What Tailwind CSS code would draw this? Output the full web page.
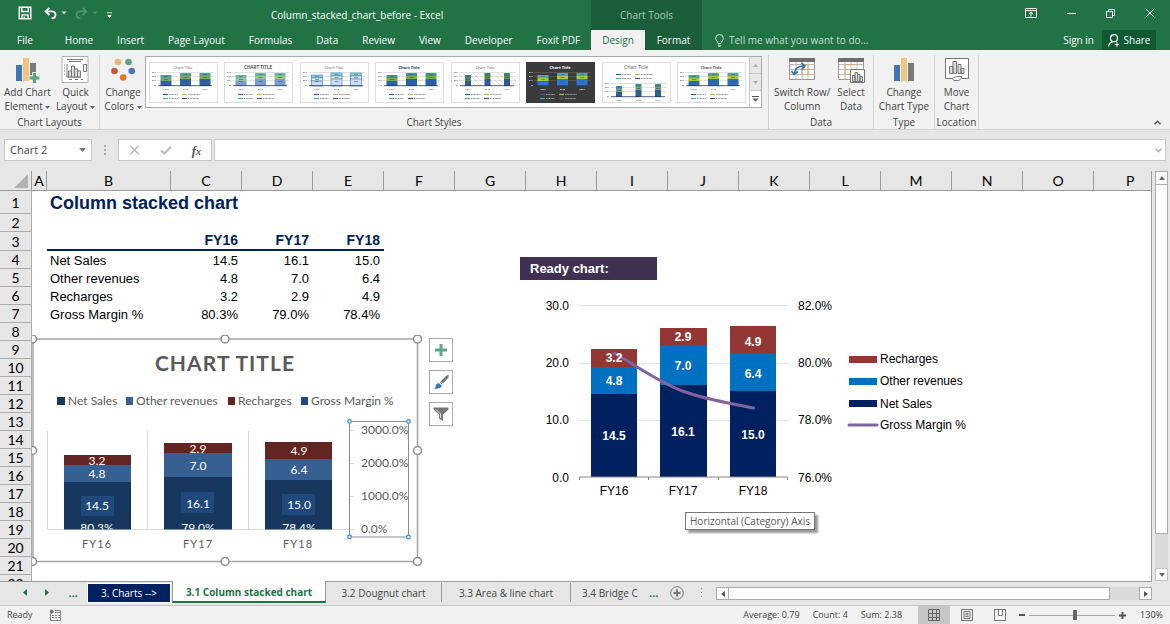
<!DOCTYPE html>
<html lang="en">
<head>
    <meta charset="UTF-8">
    <meta name="viewport" content="width=device-width, initial-scale=1.0">
    <title>Column_stacked_chart_before - Excel</title>
    <script src="https://cdn.jsdelivr.net/npm/@tailwindcss/browser@4"></script>
</head>
<body class="h-screen flex flex-col overflow-hidden bg-[#e6e6e6] font-['Open_Sans',sans-serif] text-[10px] text-[#444]">

    <!-- Title bar and tabs -->
    <header class="bg-[#217346] text-white shrink-0">
        <div class="flex h-[30px]">
            <div class="flex w-[591px] items-center">
                <div class="flex items-center w-[271px] pl-[18px] gap-2 pb-1">
                    <button aria-label="Save"><svg width="14" height="14" viewBox="0 0 14 14" fill="none" stroke="#fff" stroke-width="1.4"><path d="M1.2 1.2h11.6v11.6H1.2zM3.7 1.2v4.3h6.6V1.2M4 12.8V8.9h6v3.9M6.3 10.5v2"/></svg></button>
                    <button aria-label="Undo" class="flex items-center gap-1 pl-1"><svg width="13" height="13" viewBox="0 0 13 13" fill="none" stroke="#fff" stroke-width="1.8"><path d="M5.4 .8L1.6 4.4l3.8 3.6M1.8 4.4h6.4c4.6 .2 4.4 6.6-.6 7"/></svg><svg width="6" height="4" viewBox="0 0 6 4"><path d="M.5 .5h5L3 3.3z" fill="#fff"/></svg></button>
                    <button aria-label="Redo" class="flex items-center gap-1"><svg width="13" height="13" viewBox="0 0 13 13" fill="none" stroke="#4f9570" stroke-width="1.8"><path d="M7.6 .8l3.8 3.6-3.8 3.6M11.2 4.4H4.8C.2 4.6 .4 11 5.4 11.4"/></svg><svg width="6" height="4" viewBox="0 0 6 4"><path d="M.5 .5h5L3 3.3z" fill="#4f9570"/></svg></button>
                    <button aria-label="Customize toolbar" class="pt-1"><svg width="7" height="7" viewBox="0 0 7 7"><path d="M1 .8h5M1.8 3.500h3.400L3.500 5.500z" fill="#fff" stroke="#fff" stroke-width=".8"/></svg></button>
                </div>
                <h1>Column_stacked_chart_before - Excel</h1>
            </div>
            <div class="w-[111px] bg-[#1b5e39] text-[#a8cbb7] flex items-center justify-center">Chart Tools</div>
            <div class="flex-1 flex items-center justify-end gap-[30px] pr-[15px] pb-1">
                <button aria-label="Ribbon display options"><svg width="12" height="10" viewBox="0 0 12 10" fill="none" stroke="#fff"><path d="M.5 .5h11v9H.5zM.5 2.5h11M6 8.5V4M4 5.8L6 4l2 1.8"/></svg></button>
                <button aria-label="Minimize"><svg width="9" height="10" viewBox="0 0 9 10" stroke="#fff"><path d="M0 5.5h9"/></svg></button>
                <button aria-label="Restore"><svg width="9" height="9" viewBox="0 0 9 9" fill="none" stroke="#fff"><path d="M.5 2.5h6v6h-6zM2.5 2.5v-2h6v6h-2"/></svg></button>
                <button aria-label="Close"><svg width="10" height="10" viewBox="0 0 10 10" stroke="#fff"><path d="M.8 .8l8.4 8.4M9.2 .8L.8 9.2"/></svg></button>
            </div>
        </div>
        <div class="flex h-[20px]">
            <nav class="flex w-[591px] items-center pl-[17px] gap-6 whitespace-nowrap">
                <a href="#file" class="pr-2">File</a>
                <a href="#home">Home</a>
                <a href="#insert">Insert</a>
                <a href="#layout">Page Layout</a>
                <a href="#formulas">Formulas</a>
                <a href="#data">Data</a>
                <a href="#review">Review</a>
                <a href="#view">View</a>
                <a href="#developer">Developer</a>
                <a href="#foxit">Foxit PDF</a>
            </nav>
            <nav class="flex w-[111px] bg-[#1b5e39]">
                <a href="#design" class="w-[54px] bg-[#f1f1f1] text-[#217346] font-medium flex items-center justify-center">Design</a>
                <a href="#format" class="flex-1 flex items-center justify-center">Format</a>
            </nav>
            <div class="flex-1 flex items-center pl-[13px]">
                <svg width="9" height="13" viewBox="0 0 9 13" fill="none" stroke="#d3e5da"><path d="M3 9.5C3 7.5 .7 6.8 .7 4.3a3.8 3.8 0 0 1 7.6 0C8.3 6.8 6 7.5 6 9.5zM3 11.2h3M3.5 12.6h2"/></svg>
                <input type="text" aria-label="Tell me" placeholder="Tell me what you want to do..." class="ml-[5px] w-[160px] outline-none placeholder:text-[#c6ddcf]">
                <a href="#signin" class="ml-auto">Sign in</a>
                <button class="ml-2 mr-[14px] h-[20px] w-[54px] bg-[#0f5a30] flex items-center justify-center gap-1"><svg width="12" height="13" viewBox="0 0 12 13" fill="none" stroke="#fff" stroke-width="1.2"><circle cx="6" cy="4.2" r="3.5"/><path d="M.6 12.5c.3-3 2-4.6 4.6-4.9M9 8.2v4.6M6.7 10.5h4.6"/></svg>Share</button>
            </div>
        </div>
    </header>

    <!-- Ribbon -->
    <section class="flex h-[80px] shrink-0 bg-[#f1f1f1] border-b border-[#d2d2d2] leading-[14px] text-center pt-[5px]">
        <div class="flex flex-col w-[100px] border-r border-[#d4d4d4]">
            <div class="flex h-[60px] items-start justify-between px-1">
                <button class="flex flex-col items-center">
                    <svg width="26" height="28" viewBox="0 0 26 28"><path fill="#3f76b4" d="M2 10h6v16H2z"/><path fill="#eec77d" d="M9 3h6v23H9z"/><path fill="#7a7a7a" d="M16 8h6v12h-6z"/><path fill="#5ba37f" stroke="#f1f1f1" d="M18.500 17.500h4v3.500h3.500v4h-3.500v3.500h-4v-3.500H15v-4h3.500z"/></svg>
                    <span class="mt-[2px]">Add Chart</span><span>Element <svg class="inline" width="5" height="3"><path d="M0 0h5L2.500 3z" fill="#666"/></svg></span>
                </button>
                <button class="flex flex-col items-center">
                    <svg width="28" height="28" viewBox="0 0 28 28" fill="none" stroke="#777"><path fill="#fff" d="M1 1.500h26v26H1z" stroke="#b0b0b0"/><path d="M6 4.500h16M8 6.500h12M3 10h1M3 13h1M3 16h1M3 19h1M6 9v13h14M8 24.500h3M14 24.500h3M20 24.500h2"/><path fill="#ddd" d="M7.500 16h3v6h-3zM10.500 11h3v11h-3zM13.500 14h3v8h-3zM16.500 16h3v6h-3z"/><path d="M22.500 9.500h3v7h-3z"/></svg>
                    <span class="mt-[2px]">Quick</span><span>Layout <svg class="inline" width="5" height="3"><path d="M0 0h5L2.500 3z" fill="#666"/></svg></span>
                </button>
            </div>
            <div>Chart Layouts</div>
        </div>
        <div class="flex flex-col w-[669px] border-r border-[#d4d4d4]">
            <div class="flex h-[60px] items-start">
                <button class="flex flex-col items-center w-[45px] pl-px">
                    <svg width="26" height="28" viewBox="0 0 26 28"><circle cx="8" cy="7" r="3.300" fill="#e8b470"/><circle cx="18.500" cy="7" r="3.300" fill="#63a188"/><circle cx="4.500" cy="16" r="3.300" fill="#c9573a"/><circle cx="21.800" cy="16" r="3.300" fill="#4678b8"/><circle cx="13.200" cy="22.500" r="3.300" fill="#dd7a2b"/></svg>
                    <span class="mt-[2px]">Change</span><span>Colors <svg class="inline" width="5" height="3"><path d="M0 0h5L2.500 3z" fill="#666"/></svg></span>
                </button>
                <div class="flex w-[617px] h-[52px] mt-px border border-[#ababab] bg-white">
                    <div id="styleGallery" class="flex flex-1 items-center justify-between px-[3px]"></div>
                    <div class="flex flex-col w-[12px] border-l border-[#c6c6c6]">
                        <button aria-label="Scroll up" class="flex-1 bg-[#e8e8e8] border-b border-[#c6c6c6] flex items-center justify-center"><svg width="5" height="3"><path d="M0 3h5L2.500 0z" fill="#aaa"/></svg></button>
                        <button aria-label="Scroll down" class="flex-1 bg-[#e8e8e8] border-b border-[#c6c6c6] flex items-center justify-center"><svg width="5" height="3"><path d="M0 0h5L2.500 3z" fill="#aaa"/></svg></button>
                        <button aria-label="More styles" class="flex-1 bg-white flex items-center justify-center"><svg width="7" height="6"><path d="M0 0h7v1H0zM.5 2.500h6L3.500 5.500z" fill="#555"/></svg></button>
                    </div>
                </div>
            </div>
            <div>Chart Styles</div>
        </div>
        <div class="flex flex-col w-[105px] border-r border-[#d4d4d4]">
            <div class="flex h-[60px] items-start justify-between pl-[5px] pr-2">
                <button class="flex flex-col items-center whitespace-nowrap">
                    <svg width="26" height="28" viewBox="0 0 26 28" fill="none"><path fill="#fff" stroke="#999" d="M.5 3.500h25v21H.5z"/><path stroke="#bbb" d="M1 9.500h24M1 14.500h24M1 19.500h24M7 5v19M13 5v19M19 5v19"/><path fill="#6d6d6d" d="M0 3h26v4H0z"/><path stroke="#e3a366" d="M13 9.500h6v10h-6zM13 14.500h6"/><path stroke="#3575b5" stroke-width="1.700" d="M5.500 19c0-5 3-8 9.500-8M12.500 8l3.500 3-3.500 3.500M2.500 16l2.700 3.500 3.500-3"/></svg>
                    <span class="mt-[2px]">Switch Row/</span><span>Column</span>
                </button>
                <button class="flex flex-col items-center">
                    <svg width="28" height="28" viewBox="0 0 28 28" fill="none"><path fill="#fff" stroke="#999" d="M1.500 3.500h25v21h-25z"/><path stroke="#bbb" d="M2 9.500h24M2 14.500h24M2 19.500h24M8 5v19M14 5v19M20 5v19"/><path fill="#6d6d6d" d="M1 3h26v4H1z"/><path stroke="#e3a366" d="M8 9.500h12M8 14.500h6M8 19.500h6M8 9.500v10"/><path fill="#fff" stroke="#777" d="M13.500 14.500h14v13h-14z"/><path fill="#ddd" stroke="#777" d="M15.500 20.500h2.500v6h-2.500zM18 17.500h2.500v9H18zM20.500 19.500h2.500v7h-2.500zM23 21.500h2.500v5H23z"/></svg>
                    <span class="mt-[2px]">Select</span><span>Data</span>
                </button>
            </div>
            <div>Data</div>
        </div>
        <div class="flex flex-col w-[61px] border-r border-[#d4d4d4]">
            <button class="flex h-[60px] flex-col items-center whitespace-nowrap">
                <svg width="22" height="28" viewBox="0 0 22 28"><path fill="#3f76b4" d="M1 10h6v16H1z"/><path fill="#eec77d" d="M8 3h6v23H8z"/><path fill="#7a7a7a" d="M15 8h6v18h-6z"/></svg>
                <span class="mt-[2px]">Change</span><span>Chart Type</span>
            </button>
            <div>Type</div>
        </div>
        <div class="flex flex-col w-[44px] border-r border-[#d4d4d4]">
            <button class="flex h-[60px] flex-col items-center">
                <svg width="24" height="28" viewBox="0 0 24 28" fill="none" stroke="#777"><path fill="#fff" d="M8 23.500H.500v-20h23v20H17"/><path fill="#ddd" d="M4.500 11.500h3.500v7H4.500zM8 6.500h3.500v12H8zM13 9.500h3v9h-3zM16 13.500h3v5h-3z"/><path fill="#fff" d="M7 23.500c2-.5 3-2 6-2h4c-1 3-2 4-5 4H9z"/></svg>
                <span class="mt-[2px]">Move</span><span>Chart</span>
            </button>
            <div>Location</div>
        </div>
        <button aria-label="Collapse ribbon" class="ml-auto self-end mr-[9px] mb-1"><svg width="7" height="5" fill="none" stroke="#555" stroke-width="1.500"><path d="M.5 4.300L3.500 1.300l3 3"/></svg></button>
    </section>

    <!-- Formula bar -->
    <section class="flex h-[41px] shrink-0 items-start pt-[9px] pl-1 pr-1">
        <div class="flex items-center w-[88px] h-[22px] bg-white border border-[#c6c6c6]">
            <select aria-label="Name box" class="appearance-none flex-1 pl-[5px] text-[11px] outline-none"><option>Chart 2</option></select>
            <svg class="mr-[5px]" width="7" height="4"><path d="M0 0h7L3.500 4z" fill="#777"/></svg>
        </div>
        <svg class="mx-3 mt-[6px]" width="2" height="11" fill="#aaa"><path d="M0 0h2v2H0zM0 4h2v2H0zM0 8h2v2H0z"/></svg>
        <div class="flex items-center justify-between w-[94px] h-[22px] bg-white border border-[#c6c6c6] pl-[10px] pr-[10px]">
            <button aria-label="Cancel"><svg width="11" height="10" stroke="#bbb" stroke-width="1.500"><path d="M1 .8l9 8.400M10 .8L1 9.200"/></svg></button>
            <button aria-label="Enter"><svg width="12" height="10" fill="none" stroke="#bbb" stroke-width="2"><path d="M1 5.500l3.500 3L11 1.500"/></svg></button>
            <button class="font-['Liberation_Serif',serif] italic font-bold text-[13px] text-[#555] leading-none">f<span class="text-[10px]">x</span></button>
        </div>
        <div class="flex flex-1 items-center ml-[2px] h-[22px] bg-white border border-[#c6c6c6]">
            <input type="text" aria-label="Formula" class="flex-1 px-2 outline-none">
            <svg class="mr-[3px]" width="7" height="5" fill="none" stroke="#aaa" stroke-width="1.300"><path d="M.5 .8l3 3 3-3"/></svg>
        </div>
    </section>

    <!-- Sheet -->
    <main class="flex flex-1 min-h-0">
        <div class="relative flex-1 overflow-hidden border-r border-[#9b9b9b]">
            <table class="w-full table-fixed border-separate border-spacing-0 bg-white font-['Liberation_Sans',sans-serif] text-[13px] leading-[17px] text-black">
                <colgroup>
                    <col class="w-[32px]"><col class="w-[15px]"><col class="w-[124px]">
                    <col class="w-[71px]"><col class="w-[71px]"><col class="w-[71px]"><col class="w-[71px]"><col class="w-[71px]"><col class="w-[71px]"><col class="w-[71px]"><col class="w-[71px]"><col class="w-[71px]"><col class="w-[71px]"><col class="w-[71px]"><col class="w-[71px]"><col class="w-[71px]"><col>
                </colgroup>
                <thead class="bg-[#e6e6e6] font-['Lato',sans-serif] text-[14px]">
                    <tr id="columnHeads" class="h-[20px]"></tr>
                </thead>
                <tbody id="sheetRows"></tbody>
            </table>

            <!-- Selected chart -->
            <svg class="absolute left-[32px] top-[164px] font-['Lato',sans-serif] text-[12px]" width="392" height="234" viewBox="32 335 392 234" role="img" aria-label="Chart 2">
                <path fill="#fff" stroke="#a6a6a6" stroke-width="1.500" d="M33 339H417.500V561.500H33z"/>
                <text class="text-[21px] font-bold tracking-wider" x="225" y="371" text-anchor="middle" fill="#595959">CHART TITLE</text>
                <g fill="#595959">
                    <path fill="#17375e" d="M57 397h8v8h-8z"/><text x="68" y="405">Net Sales</text>
                    <path fill="#376092" d="M126 397h7v8h-7z"/><text x="136" y="405">Other revenues</text>
                    <path fill="#632523" d="M228 397h7v8h-7z"/><text x="238" y="405">Recharges</text>
                    <path fill="#1f497d" d="M301 397h7v8h-7z"/><text x="311" y="405">Gross Margin %</text>
                </g>
                <path fill="none" stroke="#d9d9d9" d="M47.500 431v98.500H353M147.500 431v98M248.500 431v98"/>
                <path fill="#17375e" d="M64 482h67v47.500H64zM164 477h68v52.500h-68zM265 480h67v49.500h-67z"/>
                <path fill="#376092" d="M64 465h67v17H64zM164 453h68v24h-68zM265 459h67v21h-67z"/>
                <path fill="#632523" d="M64 455h67v10H64zM164 443h68v10h-68zM265 442h67v17h-67z"/>
                <path fill="#1f497d" d="M81 496h33v20H81zM181 492h33v21h-33zM282 494h33v21h-33z"/>
                <clipPath id="plotArea"><path d="M47 431h305v98.500H47z"/></clipPath>
                <g fill="#fff" text-anchor="middle" clip-path="url(#plotArea)">
                    <text x="97" y="465">3.2</text><text x="97" y="478">4.8</text><text x="97" y="510">14.5</text><text x="97" y="532">80.3%</text>
                    <text x="198" y="453">2.9</text><text x="198" y="470">7.0</text><text x="198" y="508">16.1</text><text x="198" y="532">79.0%</text>
                    <text x="299" y="455">4.9</text><text x="299" y="474">6.4</text><text x="299" y="509">15.0</text><text x="299" y="532">78.4%</text>
                </g>
                <g class="text-[11px] tracking-widest" fill="#595959" text-anchor="middle">
                    <text x="97" y="548">FY16</text><text x="198" y="548">FY17</text><text x="298" y="548">FY18</text>
                </g>
                <path fill="none" stroke="#8c8c8c" d="M349.500 421.500h59v115.500h-59z"/>
                <path stroke="#d9d9d9" d="M350 430.500h4M350 463.500h4M350 496.500h4M350 529.500h4"/>
                <g fill="#595959"><text x="361" y="434">3000.0%</text><text x="361" y="467">2000.0%</text><text x="361" y="500">1000.0%</text><text x="361" y="533">0.0%</text></g>
                <g fill="#fff" stroke="#2e8fc9" stroke-width="1.200"><circle cx="349.500" cy="421.500" r="1.800"/><circle cx="408.500" cy="421.500" r="1.800"/><circle cx="349.500" cy="537" r="1.800"/><circle cx="408.500" cy="537" r="1.800"/></g>
                <g fill="#fff" stroke="#8c8c8c" stroke-width="1.500"><circle cx="32.500" cy="339" r="4"/><circle cx="225" cy="339" r="4"/><circle cx="417.500" cy="339" r="4"/><circle cx="32.500" cy="450.500" r="4"/><circle cx="417.500" cy="450.500" r="4"/><circle cx="32.500" cy="561.500" r="4"/><circle cx="225" cy="561.500" r="4"/><circle cx="417.500" cy="561.500" r="4"/></g>
            </svg>
            <div class="absolute left-[429px] top-[167px] flex flex-col gap-2">
                <button aria-label="Chart elements" class="size-[24px] bg-white border border-[#ababab] flex items-center justify-center"><svg width="12" height="12"><path fill="#5fa587" d="M4.500 0h3v4.500H12v3H7.500V12h-3V7.500H0v-3h4.500z"/></svg></button>
                <button aria-label="Chart styles" class="size-[24px] bg-white border border-[#ababab] flex items-center justify-center"><svg width="16" height="16"><path fill="#777" d="M15.500 .5v3L10 9.500 7.500 7.500 13 2z"/><path fill="none" stroke="#777" d="M7 8.200l2.300 2"/><path fill="#3a78b0" d="M6 9.200l2.800 2.300c0 3-5 3.500-8.300 3 1.500-.5 2-1.500 2.300-3C3.300 9.800 4.500 9 6 9.200z"/></svg></button>
                <button aria-label="Chart filters" class="size-[24px] bg-white border border-[#ababab] flex items-center justify-center"><svg width="16" height="14"><path fill="#777" d="M.5 .5h15v2L10 7.500V14l-4-2.500v-4L.5 2.500z"/><path stroke="#fff" fill="none" stroke-width=".8" d="M3 2.500l4.500 4.500v4"/></svg></button>
            </div>

            <!-- Ready chart -->
            <div class="absolute left-[520px] top-[86px] w-[137px] h-[23px] bg-[#403152] pl-[10px] flex items-center font-['Liberation_Sans',sans-serif] font-bold text-[13px] text-white">Ready chart:</div>
            <svg class="absolute left-[545px] top-[124px] font-['Liberation_Sans',sans-serif] text-[12px]" width="430" height="210" viewBox="545 295 430 210" role="img" aria-label="Ready chart">
                <path stroke="#e3e3e3" d="M579 305.500h209M579 363.500h209M579 420.500h209"/>
                <path fill="#002060" d="M591 394h46v83h-46zM660 385h47v92h-47zM730 391h46v86h-46z"/>
                <path fill="#0070c0" d="M591 367h46v27h-46zM660 345h47v40h-47zM730 354h46v37h-46z"/>
                <path fill="#943634" d="M591 349h46v18h-46zM660 328h47v17h-47zM730 326h46v28h-46z"/>
                <path fill="none" stroke="#868686" d="M579.500 480v-3h208v3M648.500 477v3M718.500 477v3"/>
                <path fill="none" stroke="#8064a2" stroke-width="3" stroke-linecap="round" d="M614 353C637 366 660 383 684 391.500C707 400 730 403 753.500 408"/>
                <g class="font-bold" fill="#fff" text-anchor="middle">
                    <text x="614" y="362">3.2</text><text x="614" y="385">4.8</text><text x="614" y="440">14.5</text>
                    <text x="683" y="341">2.9</text><text x="683" y="370">7.0</text><text x="683" y="436">16.1</text>
                    <text x="753" y="346">4.9</text><text x="753" y="378">6.4</text><text x="753" y="439">15.0</text>
                </g>
                <g text-anchor="end"><text x="569" y="310">30.0</text><text x="569" y="367">20.0</text><text x="569" y="424">10.0</text><text x="569" y="482">0.0</text></g>
                <g><text x="798" y="310">82.0%</text><text x="798" y="367">80.0%</text><text x="798" y="424">78.0%</text><text x="798" y="482">76.0%</text></g>
                <g text-anchor="middle"><text x="614" y="495">FY16</text><text x="683" y="495">FY17</text><text x="753" y="495">FY18</text></g>
                <path fill="#943634" d="M849 356h28v7h-28z"/><path fill="#0070c0" d="M849 378h28v7h-28z"/><path fill="#002060" d="M849 400h28v7h-28z"/>
                <path stroke="#8064a2" stroke-width="3" stroke-linecap="round" d="M849 425h28"/>
                <g><text x="880" y="363">Recharges</text><text x="880" y="385">Other revenues</text><text x="880" y="408">Net Sales</text><text x="880" y="429">Gross Margin %</text></g>
            </svg>
            <div class="absolute left-[685px] top-[341px] h-[18px] px-1 flex items-center bg-white border border-[#767676] shadow-[3px_3px_2px_#999] text-[#575757] whitespace-nowrap">Horizontal (Category) Axis</div>
        </div>

        <!-- Vertical scrollbar -->
        <div class="flex flex-col w-[18px] pl-[3px] pr-[2px]">
            <button aria-label="Scroll up" class="h-[14px] bg-white border border-[#ababab] flex items-center justify-center"><svg width="6" height="4"><path d="M0 4h6L3 0z" fill="#666"/></svg></button>
            <div class="flex-1 bg-[#dadada]"><div class="h-[91%] bg-white border border-t-0 border-[#ababab]"></div></div>
            <button aria-label="Scroll down" class="h-[13px] bg-white border border-[#c6c6c6] flex items-center justify-center"><svg width="6" height="4"><path d="M0 0h6L3 4z" fill="#666"/></svg></button>
        </div>
    </main>

    <!-- Sheet tabs -->
    <section class="flex h-[24px] shrink-0 items-start leading-[20px] whitespace-nowrap">
        <div class="flex w-[716px] h-[22px] border-t border-[#9b9b9b]">
            <div class="flex w-[87px] items-center justify-between pl-[22px] pr-[9px] font-bold text-[#217346]">
                <button aria-label="Previous sheet"><svg width="5" height="7"><path d="M5 0v7L1 3.500z" fill="#217346"/></svg></button>
                <button aria-label="Next sheet"><svg width="5" height="7"><path d="M0 0v7l4-3.500z" fill="#217346"/></svg></button>
                <button class="leading-none text-[11px]">...</button>
            </div>
            <a href="#s3" class="w-[84px] mt-px mr-px bg-[#002060] border border-white text-white text-center leading-[18px]">3. Charts --&gt;</a>
            <a href="#s31" class="w-[154px] -mt-px bg-white border-x border-[#9b9b9b] border-b-2 border-b-[#217346] text-[#217346] leading-[22px] font-bold text-center">3.1 Column stacked chart</a>
            <a href="#s32" class="w-[116px] my-px border-r border-[#9b9b9b] text-center">3.2 Dougnut chart</a>
            <a href="#s33" class="w-[129px] my-px border-r border-[#9b9b9b] text-center">3.3 Area &amp; line chart</a>
            <a href="#s34" class="pl-[11px] mt-px w-[72px] overflow-hidden">3.4 Bridge C</a>
            <button class="ml-[6px] font-bold text-[11px] text-[#217346] leading-none">...</button>
            <button aria-label="New sheet" class="ml-[12px]"><svg width="14" height="14" fill="none" stroke="#777"><circle cx="7" cy="7" r="6.300"/><path stroke-width="2" d="M7 3.500v7M3.500 7h7"/></svg></button>
            <svg class="ml-[17px] mt-[6px]" width="2" height="11" fill="#999"><path d="M0 0h1v1H0zM0 4h1v1H0zM0 8h1v1H0z"/></svg>
        </div>
        <div class="flex flex-1 h-[22px] border-t border-[#9b9b9b] pt-[5px] mr-[18px]">
            <button aria-label="Scroll left" class="w-[13px] h-[13px] bg-white border border-[#ababab] flex items-center justify-center"><svg width="4" height="6"><path d="M4 0v6L0 3z" fill="#555"/></svg></button>
            <div class="flex-1 h-[13px] bg-[#dadada]"><div class="w-[93%] h-[13px] bg-white border border-l-0 border-[#ababab]"></div></div>
            <button aria-label="Scroll right" class="w-[13px] h-[13px] bg-white border border-[#ababab] flex items-center justify-center"><svg width="4" height="6"><path d="M0 0v6l4-3z" fill="#555"/></svg></button>
        </div>
    </section>

    <!-- Status bar -->
    <footer class="flex h-[19px] shrink-0 items-center bg-[#f1f1f1] border-t border-[#c6c6c6] pl-[7px] pr-[7px] text-[9px] whitespace-nowrap">
        <span>Ready</span>
        <button aria-label="Record macro" class="ml-[16px]"><svg width="12" height="12" fill="none" stroke="#888"><path d="M3 4.500H1.500v7h10v-10H6M6 3.500h5"/><path stroke-dasharray="2 1" d="M3 6.500h8M3 8.500h8"/><circle cx="2.800" cy="2.500" r="2" fill="#777" stroke="none"/></svg></button>
        <div class="ml-auto flex gap-[13px] pr-4"><span>Average: 0.79</span><span>Count: 4</span><span>Sum: 2.38</span></div>
        <button aria-label="Normal" class="w-[32px] h-[18px] bg-[#c6c6c6] flex items-center justify-center"><svg width="12" height="12" fill="none" stroke="#666"><path d="M.5 .5h11v11H.5zM4.500 0v12M8.500 0v12M0 4.500h12M0 8.500h12"/></svg></button>
        <button aria-label="Page layout" class="w-[33px] flex justify-center"><svg width="12" height="12" fill="none" stroke="#777"><path d="M.5 .5h11v11H.5zM3 2.500h6v7H3zM4.500 4.500h3M4.500 6h3M4.500 7.500h3"/></svg></button>
        <button aria-label="Page break" class="w-[33px] flex justify-center"><svg width="12" height="12" fill="none" stroke="#777"><path d="M.5 .5h11v11H.5zM4.500 .5v6h4v-6"/></svg></button>
        <button aria-label="Zoom out" class="ml-[3px]"><svg width="6" height="6"><path d="M0 2h6v2H0z" fill="#555"/></svg></button>
        <input type="range" aria-label="Zoom" min="0" max="100" value="54" class="w-[86px] mx-1 h-[12px] appearance-none bg-transparent [&::-webkit-slider-runnable-track]:h-px [&::-webkit-slider-runnable-track]:bg-[#a6a6a6] [&::-webkit-slider-thumb]:appearance-none [&::-webkit-slider-thumb]:w-[4px] [&::-webkit-slider-thumb]:h-[10px] [&::-webkit-slider-thumb]:-mt-[5px] [&::-webkit-slider-thumb]:bg-[#666]">
        <button aria-label="Zoom in"><svg width="7" height="7"><path d="M2.500 0h2v2.500H7v2H4.500V7h-2V4.500H0v-2h2.500z" fill="#555"/></svg></button>
        <span class="pl-[14px]">130%</span>
    </footer>

    <script>
        // Column headers
        const heads = "ABCDEFGHIJKLMNOP".split("");
        document.getElementById("columnHeads").innerHTML =
            `<th class="p-0 border-r border-b border-[#9b9b9b]"><svg class="ml-auto mr-[3px]" width="14" height="14"><path d="M14 0v14H0z" fill="#b2b2b2"/></svg></th>` +
            heads.map((h, i) => `<th class="p-0 font-normal border-b border-[#9b9b9b] ${i < 15 ? "border-r" : "text-left pl-[32px]"}">${h}</th>`).join("");

        // Cell contents, keyed by row
        const data = {
            1: ["Column stacked chart"],
            3: ["", "FY16", "FY17", "FY18"],
            4: ["Net Sales", "14.5", "16.1", "15.0"],
            5: ["Other revenues", "4.8", "7.0", "6.4"],
            6: ["Recharges", "3.2", "2.9", "4.9"],
            7: ["Gross Margin %", "80.3%", "79.0%", "78.4%"]
        };
        const rowHeight = { 1: "h-[23px]", 3: "h-[19px]" };
        let rows = "";
        for (let r = 1; r <= 22; r++) {
            const cells = data[r] || [];
            let style = "";
            if (r === 1) style = "text-[18px] leading-[22px] font-bold text-[#002060]";
            if (r === 3) style = "text-[14px] font-bold text-[#002060] border-b-2 border-[#002060]";
            let tds = "<td></td>";
            for (let c = 0; c < 15; c++) {
                tds += `<td class="p-0 whitespace-nowrap ${c < 4 ? style : ""} ${c ? "text-right pr-[4px]" : "pl-[3px]"}">${cells[c] || ""}</td>`;
            }
            rows += `<tr class="${rowHeight[r] || "h-[18px]"}"><th class="p-0 font-normal font-['Lato',sans-serif] text-[14px] bg-[#e6e6e6] border-r border-b border-[#ababab]">${r}</th>${tds}</tr>`;
        }
        document.getElementById("sheetRows").innerHTML = rows;

        // Chart style thumbnails
        const styles = [
            { title: "Chart Title", colors: ["#2f62a5", "#79a864", "#4ba5a0"] },
            { title: "CHART TITLE", weight: "bold", size: 4.5, colors: ["#7a9bd0", "#9cc48d", "#6cb6ba"] },
            { title: "Chart Title", outline: true, colors: ["#c9dcf3", "#eef7c8", "#8ad8dc"] },
            { title: "Chart Title", weight: "bold", ink: "#17375e", colors: ["#2563ae", "#77ac4b", "#3a96a8"] },
            { title: "Chart Title", thin: true, hatch: true, colors: ["#2e5d96", "#638c48", "#3f8491"] },
            { title: "Chart Title", weight: "bold", dark: true, colors: ["#2d74cf", "#a2c94b", "#49a9b5"] },
            { title: "Chart Title", size: 5, thin: true, legendTop: true, colors: ["#2c5f9e", "#84a83f", "#3c94a0"] },
            { title: "Chart Title", weight: "bold", colors: ["#2d6cb5", "#a1c83f", "#48a99c"] }
        ];
        const thumb = (s) => {
            const dy = s.legendTop ? 11 : 0;
            const ly = s.legendTop ? -20 : 0;
            const w = s.thin ? 6 : 11;
            const bars = [[17, 13], [36.5, 11], [56, 11]].map(([x, y]) => {
                const st = s.outline ? `stroke="#4e86c6" stroke-width=".7"` : "";
                return `<g ${st}><rect x="${x - w / 2}" y="${y + dy}" width="${w}" height="3" fill="${s.colors[2]}"/>
                    <rect x="${x - w / 2}" y="${y + 3 + dy}" width="${w}" height="3" fill="${s.colors[1]}"/>
                    <rect x="${x - w / 2}" y="${y + 6 + dy}" width="${w}" height="${18 - y}" fill="${s.colors[0]}"/></g>
                    <path d="M${x - 2} ${y + 1.5 + dy}h4M${x - 2} ${y + 4.5 + dy}h4M${x - 2} ${19.5 + dy}h4" stroke="#34506f" stroke-width=".5"/>
                    <path d="M${x - 2.5} ${27.5 + dy}h5" stroke="${s.dark ? "#ccc" : "#999"}" stroke-dasharray="1 .4"/>`;
            }).join("");
            const ink = s.dark ? "#fff" : s.ink || "#555";
            const hatch = s.hatch ? `<path d="M8 22l2 2M8 17l7 7M8 12l12 12M12 11l13 13M17 11l13 13M22 11l13 13M27 11l13 13M32 11l13 13M37 11l13 13M42 11l13 13M47 11l13 13M52 11l13 13M57 11l8 8" stroke="#bbb" stroke-width=".4"/>` : "";
            return `<svg width="69" height="41" viewBox="0 0 69 41">
                <rect x=".5" y=".5" width="68" height="40" fill="${s.dark ? "#3b3b3b" : "#fff"}" stroke="${s.dark ? "#3b3b3b" : "#dcdcdc"}"/>
                <text x="34" y="6.500" font-size="${s.size || 4}" font-weight="${s.weight || "normal"}" text-anchor="middle" fill="${ink}">${s.title}</text>
                <path d="M8 ${10.5 + dy}h57M8 ${14.5 + dy}h57M8 ${18.5 + dy}h57" stroke="${s.dark ? "#666" : "#ccc"}" stroke-width=".6"/>
                <path d="M3 ${10.5 + dy}h4M3 ${14.5 + dy}h4M3 ${18.5 + dy}h4M5 ${23.5 + dy}h2" stroke="${s.dark ? "#aaa" : "#999"}" stroke-dasharray="1 .3"/>
                ${hatch}${bars}
                <path d="M9 ${23.7 + dy}h54" stroke="#23375f" stroke-width=".8"/>
                <g stroke-width="1.200"><path d="M14 ${32.5 + ly}h5" stroke="#2f62a5"/><path d="M33 ${32.5 + ly}h5" stroke="#a3bf45"/><path d="M14 ${36.5 + ly}h5" stroke="#43a6ba"/><path d="M33 ${36.5 + ly}h5" stroke="#555"/></g>
                <path d="M20 ${32.5 + ly}h9M39 ${32.5 + ly}h12M20 ${36.5 + ly}h9M39 ${36.5 + ly}h11" stroke="#999" stroke-dasharray="1.200 .3"/>
            </svg>`;
        };
        document.getElementById("styleGallery").innerHTML = styles.map((s) => `<button aria-label="Chart style">${thumb(s)}</button>`).join("");
    </script>
</body>
</html>
